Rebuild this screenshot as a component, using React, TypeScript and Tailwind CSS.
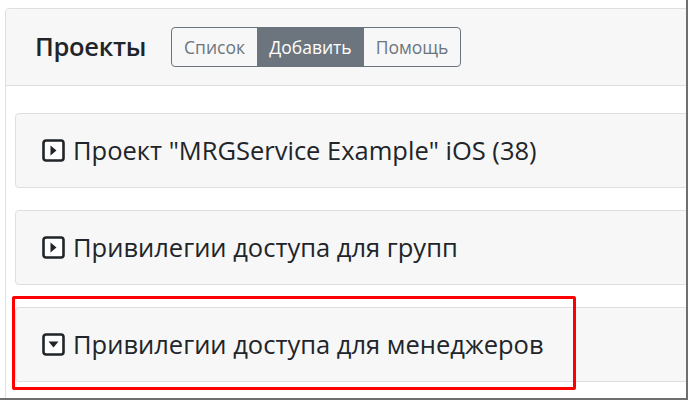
import React from 'react';

type Item = { title: string; open?: boolean };

const items: Item[] = [
  { title: 'Проект "MRGService Example" iOS (38)' },
  { title: 'Привилегии доступа для групп' },
  { title: 'Привилегии доступа для менеджеров', open: true },
];

const CaretSquare = ({ open }: { open?: boolean }) => (
  <svg width="23" height="23" viewBox="0 0 23 23" className="shrink-0">
    <rect x="1.5" y="1.5" width="20" height="20" rx="2.5" fill="white" stroke="#212529" strokeWidth="2.6" />
    {open ? (
      <path d="M6.5 8.5h10l-5 6z" fill="#212529" />
    ) : (
      <path d="M8.5 6.5v10l6-5z" fill="#212529" />
    )}
  </svg>
);

export default function App() {
  return (
    <div className="relative w-[688px] h-[400px] overflow-hidden bg-white font-['Open_Sans',sans-serif] text-[#212529]">
      <div className="w-full h-full overflow-hidden border-r-2 border-b-2 border-[#6f6f6f] pl-[5px] pt-[8px]">
        <div className="w-[720px] border border-[#dfdfdf] rounded-[4px]">
          <div className="h-[77px] bg-[#f7f7f7] border-b border-[#dfdfdf] flex items-center pl-[29px] gap-[25px] rounded-t-[4px]">
            <h2 className="text-[25.5px] font-semibold leading-none tracking-[-0.3px]">Проекты</h2>
            <div className="flex h-[40px] border border-[#6c757d] rounded-[4px] overflow-hidden text-[17.5px] text-[#6c757d]">
              <button className="w-[85px] flex items-center justify-center">Список</button>
              <button className="w-[107px] flex items-center justify-center bg-[#6c757d] text-white">Добавить</button>
              <button className="w-[96px] flex items-center justify-center">Помощь</button>
            </div>
          </div>
          <div className="pl-[9px] pt-[27px] pb-[20px] flex flex-col gap-[22px]">
            {items.map(item => (
              <div
                key={item.title}
                className="h-[75px] bg-[#f7f7f7] border border-[#dfdfdf] rounded-[4px] flex items-center pl-[26px] gap-[8px]"
              >
                <CaretSquare open={item.open} />
                <span className="text-[25.5px] leading-none">{item.title}</span>
              </div>
            ))}
          </div>
        </div>
      </div>
      <div className="absolute left-[12px] top-[296px] w-[564px] h-[94px] border-[3px] border-[#ff0000] rounded-[2px]" />
    </div>
  );
}
